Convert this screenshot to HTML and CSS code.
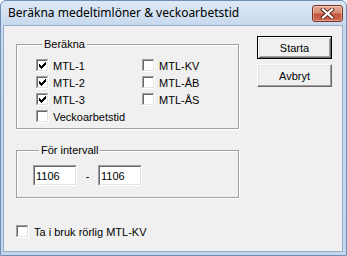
FILE: index.html
```html
<!DOCTYPE html>
<html lang="sv">
<head>
<meta charset="utf-8">
<title>Beräkna medeltimlöner &amp; veckoarbetstid</title>
<link rel="stylesheet" href="styles.css">
</head>
<body>
<div class="window">
  <div class="titlebar">
    <span class="title">Beräkna medeltimlöner &amp; veckoarbetstid</span>
    <span class="close">
      <svg width="15" height="11" viewBox="0 0 15 11">
        <path d="M3 1.5 L12 9.5 M12 1.5 L3 9.5" stroke="#5a2418" stroke-width="4" stroke-linecap="square"/>
        <path d="M3 1.5 L12 9.5 M12 1.5 L3 9.5" stroke="#fff" stroke-width="2.2" stroke-linecap="square"/>
      </svg>
    </span>
  </div>
  <div class="client">
    <div class="leftcol">
      <fieldset class="group group-calc">
        <legend>Beräkna</legend>
        <div class="checks">
          <label class="chk"><svg class="cb" width="13" height="13" viewBox="0 0 13 13"><path fill="#a0a0a0" d="M0 0h12v1H1v11H0z"/><path fill="#696969" d="M1 1h10v1H2v9H1z"/><path fill="#e3e3e3" d="M11 1h1v11H1v-1h10z"/><path fill="#fff" d="M12 0h1v13H0v-1h12z"/><rect x="2" y="2" width="9" height="9" fill="#fff"/><path fill="#000" d="M3 5h1v3H3zM4 6h1v3H4zM5 7h1v3H5zM6 6h1v3H6zM7 5h1v3H7zM8 4h1v3H8zM9 3h1v3H9z"/></svg><span>MTL-1</span></label>
          <label class="chk"><svg class="cb" width="13" height="13" viewBox="0 0 13 13"><path fill="#a0a0a0" d="M0 0h12v1H1v11H0z"/><path fill="#696969" d="M1 1h10v1H2v9H1z"/><path fill="#e3e3e3" d="M11 1h1v11H1v-1h10z"/><path fill="#fff" d="M12 0h1v13H0v-1h12z"/><rect x="2" y="2" width="9" height="9" fill="#fff"/></svg><span>MTL-KV</span></label>
          <label class="chk"><svg class="cb" width="13" height="13" viewBox="0 0 13 13"><path fill="#a0a0a0" d="M0 0h12v1H1v11H0z"/><path fill="#696969" d="M1 1h10v1H2v9H1z"/><path fill="#e3e3e3" d="M11 1h1v11H1v-1h10z"/><path fill="#fff" d="M12 0h1v13H0v-1h12z"/><rect x="2" y="2" width="9" height="9" fill="#fff"/><path fill="#000" d="M3 5h1v3H3zM4 6h1v3H4zM5 7h1v3H5zM6 6h1v3H6zM7 5h1v3H7zM8 4h1v3H8zM9 3h1v3H9z"/></svg><span>MTL-2</span></label>
          <label class="chk"><svg class="cb" width="13" height="13" viewBox="0 0 13 13"><path fill="#a0a0a0" d="M0 0h12v1H1v11H0z"/><path fill="#696969" d="M1 1h10v1H2v9H1z"/><path fill="#e3e3e3" d="M11 1h1v11H1v-1h10z"/><path fill="#fff" d="M12 0h1v13H0v-1h12z"/><rect x="2" y="2" width="9" height="9" fill="#fff"/></svg><span>MTL-ÅB</span></label>
          <label class="chk"><svg class="cb" width="13" height="13" viewBox="0 0 13 13"><path fill="#a0a0a0" d="M0 0h12v1H1v11H0z"/><path fill="#696969" d="M1 1h10v1H2v9H1z"/><path fill="#e3e3e3" d="M11 1h1v11H1v-1h10z"/><path fill="#fff" d="M12 0h1v13H0v-1h12z"/><rect x="2" y="2" width="9" height="9" fill="#fff"/><path fill="#000" d="M3 5h1v3H3zM4 6h1v3H4zM5 7h1v3H5zM6 6h1v3H6zM7 5h1v3H7zM8 4h1v3H8zM9 3h1v3H9z"/></svg><span>MTL-3</span></label>
          <label class="chk"><svg class="cb" width="13" height="13" viewBox="0 0 13 13"><path fill="#a0a0a0" d="M0 0h12v1H1v11H0z"/><path fill="#696969" d="M1 1h10v1H2v9H1z"/><path fill="#e3e3e3" d="M11 1h1v11H1v-1h10z"/><path fill="#fff" d="M12 0h1v13H0v-1h12z"/><rect x="2" y="2" width="9" height="9" fill="#fff"/></svg><span>MTL-ÅS</span></label>
          <label class="chk"><svg class="cb" width="13" height="13" viewBox="0 0 13 13"><path fill="#a0a0a0" d="M0 0h12v1H1v11H0z"/><path fill="#696969" d="M1 1h10v1H2v9H1z"/><path fill="#e3e3e3" d="M11 1h1v11H1v-1h10z"/><path fill="#fff" d="M12 0h1v13H0v-1h12z"/><rect x="2" y="2" width="9" height="9" fill="#fff"/></svg><span>Veckoarbetstid</span></label>
        </div>
      </fieldset>
      <fieldset class="group group-interval">
        <legend>För intervall</legend>
        <div class="range">
          <span class="edit"><span class="edit-inner">1106</span></span>
          <span class="dash">-</span>
          <span class="edit"><span class="edit-inner">1106</span></span>
        </div>
      </fieldset>
      <label class="chk bottom-chk"><svg class="cb" width="13" height="13" viewBox="0 0 13 13"><path fill="#a0a0a0" d="M0 0h12v1H1v11H0z"/><path fill="#696969" d="M1 1h10v1H2v9H1z"/><path fill="#e3e3e3" d="M11 1h1v11H1v-1h10z"/><path fill="#fff" d="M12 0h1v13H0v-1h12z"/><rect x="2" y="2" width="9" height="9" fill="#fff"/></svg><span>Ta i bruk rörlig MTL-KV</span></label>
    </div>
    <div class="rightcol">
      <button class="btn btn-default" type="button">Starta</button>
      <button class="btn" type="button">Avbryt</button>
    </div>
  </div>
</div>
</body>
</html>
```
FILE: styles.css
```css
html, body {
  margin: 0;
  padding: 0;
  background: #ffffff;
}

.window {
  box-sizing: border-box;
  width: 347px;
  height: 256px;
  border: 1px solid #6f8db5;
  border-radius: 6px 6px 0 0;
  background: linear-gradient(to bottom, #dfe9f5 0px, #d3e1f1 12px, #c8d9ee 24px, #c4d6ec 100%);
  padding: 0 3px 3px 2px;
  display: flex;
  flex-direction: column;
}

.titlebar {
  height: 24px;
  flex: none;
  display: flex;
  align-items: center;
  justify-content: space-between;
  padding-left: 5px;
}

.title {
  font-family: "Noto Sans", "Open Sans", sans-serif;
  font-size: 12px;
  color: #000;
  padding-bottom: 1px;
}

.close {
  width: 31px;
  height: 17px;
  box-sizing: border-box;
  margin-top: 1px;
  border: 1px solid #7a3325;
  border-radius: 3px;
  background: linear-gradient(to bottom, #e6ab99 0%, #d88a72 45%, #c5563c 55%, #cf6a4e 100%);
  box-shadow: inset 0 0 0 1px rgba(255, 255, 255, 0.35);
  display: flex;
  align-items: center;
  justify-content: center;
}

.client {
  flex: 1;
  border: 1px solid #98aec9;
  background: #f0f0f0;
  display: flex;
  padding: 10px 0 0 12px;
  font-family: "Liberation Sans", Arial, sans-serif;
  font-size: 11px;
  color: #000;
}

.leftcol {
  width: 223px;
  display: flex;
  flex-direction: column;
}

.group {
  margin: 2px 0 0 0;
  border: 1px solid #a0a0a0;
  box-shadow: inset 1px 1px 0 #fff, 1px 1px 0 #fff;
  min-width: 0;
}

.group legend {
  padding: 0 2px;
  margin-left: 6px;
  line-height: 13px;
  background: #f0f0f0;
}

.group-calc {
  padding: 6px 0 3px 19px;
}

.checks {
  display: grid;
  grid-template-columns: 106px auto;
  grid-auto-rows: 17px;
}

.chk {
  display: flex;
  align-items: center;
  gap: 4px;
  white-space: nowrap;
}

.cb {
  display: block;
  flex: none;
  shape-rendering: crispEdges;
}

.group-interval {
  margin-top: 15px;
  padding: 8px 0 11px 16px;
}

.range {
  display: flex;
  align-items: center;
}

.edit {
  display: block;
  box-sizing: border-box;
  width: 44px;
  height: 21px;
  border: 1px solid;
  border-color: #a0a0a0 #fff #fff #a0a0a0;
}

.edit-inner {
  display: flex;
  align-items: center;
  box-sizing: border-box;
  height: 100%;
  border: 1px solid;
  border-color: #696969 #e3e3e3 #e3e3e3 #696969;
  background: #fff;
  padding-left: 1px;
}

.dash {
  width: 21px;
  text-align: center;
}

.bottom-chk {
  margin-top: 27px;
  gap: 5px;
}

.rightcol {
  margin-left: 18px;
  display: flex;
  flex-direction: column;
  gap: 5px;
}

.btn {
  width: 75px;
  height: 23px;
  margin: 0;
  padding: 0;
  font-family: "Liberation Sans", Arial, sans-serif;
  font-size: 11px;
  color: #000;
  background: #f0f0f0;
  border: 1px solid;
  border-color: #fff #696969 #696969 #fff;
  box-shadow: inset -1px -1px 0 #a0a0a0, inset 1px 1px 0 #e3e3e3;
  border-radius: 0;
}

.btn-default {
  border-color: #000;
  box-shadow: inset 1px 1px 0 #fff, inset -1px -1px 0 #696969, inset 2px 2px 0 #e3e3e3, inset -2px -2px 0 #a0a0a0;
}
```
